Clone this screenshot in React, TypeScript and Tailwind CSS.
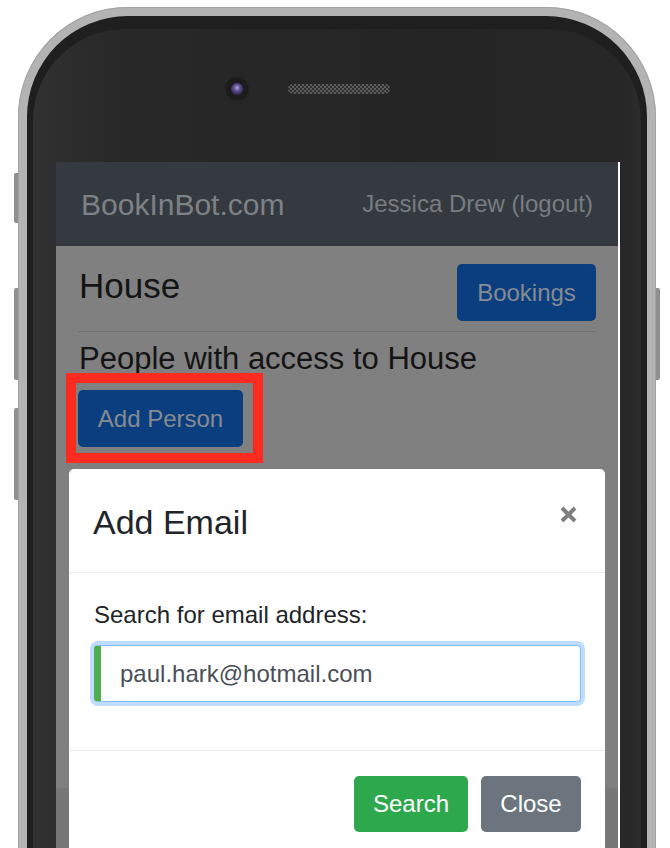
export default function App() {
  return (
    <div className="w-[670px] h-[848px] overflow-hidden bg-white font-['Liberation_Sans',Arial,sans-serif]">
      <div className="relative ml-[18px] mt-[7px] w-[638px] h-[900px]">
        {/* side buttons */}
        <div className="absolute -left-[4px] top-[166px] w-[4px] h-[50px] rounded-l-[2px] bg-[#8f8f8f]" />
        <div className="absolute -left-[4px] top-[281px] w-[4px] h-[92px] rounded-l-[2px] bg-[#8f8f8f]" />
        <div className="absolute -left-[4px] top-[401px] w-[4px] h-[92px] rounded-l-[2px] bg-[#8f8f8f]" />
        <div className="absolute -right-[4px] top-[281px] w-[4px] h-[92px] rounded-r-[2px] bg-[#8f8f8f]" />

        <div className="h-full rounded-t-[110px] bg-[#b3b3b3] p-[9px] pb-0 shadow-[inset_0_0_0_1px_#a2a2a2]">
          <div className="h-full rounded-t-[101px] bg-[#1f1f1f] px-[6px] pt-[13px]">
            <div className="h-full rounded-t-[92px] bg-[linear-gradient(90deg,#313131_0%,#282828_14%,#252525_60%,#262626_96%,#2c2c2c_100%)] flex flex-col">
              {/* camera + speaker */}
              <div className="h-[133px] flex items-start pt-[49px] pl-[193px] gap-[40px]">
                <div className="w-[22px] h-[22px] rounded-full bg-[#1c1c1c] flex items-center justify-center shadow-[0_0_2px_#141414]">
                  <div className="w-[12px] h-[12px] rounded-full bg-[radial-gradient(circle_at_50%_40%,#b3a6d6_0%,#5e4c94_35%,#2a2340_80%)]" />
                </div>
                <div className="mt-[6px] w-[102px] h-[10px] rounded-full bg-[repeating-conic-gradient(#5c5c5c_0%_25%,#2e2e2e_0%_50%)] bg-[length:4px_4px]" />
              </div>

              {/* screen */}
              <div className="flex-1 ml-[23px] mr-[21px] bg-white relative overflow-hidden">
                <div className="w-[562px] h-full flex flex-col">
                  <nav className="h-[84px] shrink-0 bg-[#343a40] flex items-center justify-between pl-[25px] pr-[25px]">
                    <span className="text-[30px] text-[#7e8185]">BookInBot.com</span>
                    <span className="text-[24px] text-[#797c80]">Jessica Drew (logout)</span>
                  </nav>

                  <main className="h-[542px] shrink-0 bg-[#808080] pl-[23px] pr-[22px] pt-[18px]">
                    <div className="flex justify-between items-start">
                      <h1 className="mt-[4px] text-[35px] leading-[35px] text-[#141414]">House</h1>
                      <button className="w-[139px] h-[57px] rounded-[5px] bg-[#0b3e7f] text-[24px] text-[#868b92]">
                        Bookings
                      </button>
                    </div>
                    <hr className="mt-[10px] -ml-[1px] border-t border-[#6f6f6f]" />
                    <h4 className="mt-[10px] text-[31px] leading-[34px] text-[#141414]">
                      People with access to House
                    </h4>
                    <div className="relative mt-[14px] w-fit">
                      <button className="-ml-[1px] w-[165px] h-[57px] rounded-[5px] bg-[#0b3e7f] text-[24px] text-[#868b92]">
                        Add Person
                      </button>
                      <div className="absolute -left-[13px] -top-[17px] w-[197px] h-[90px] border-[10px] border-[#fc2b1f]" />
                    </div>
                  </main>
                  <div className="flex-1 bg-[#777777]" />
                </div>

                {/* modal */}
                <div className="absolute left-[13px] top-[307px] w-[536px] h-[600px] bg-white rounded-[5px]">
                  <div className="h-[104px] border-b border-[#e9ecef] flex justify-between items-start pl-[24px] pr-[28px] pt-[34px]">
                    <h5 className="text-[34px] leading-[38px] text-[#212529]">Add Email</h5>
                    <svg className="mt-[3px]" width="17" height="17" viewBox="0 0 17 17">
                      <path d="M2 2L15 15M15 2L2 15" stroke="#7f7f7f" strokeWidth="4" />
                    </svg>
                  </div>
                  <div className="h-[177px] pl-[25px] pr-[24px] pt-[28px]">
                    <label className="block text-[24px] leading-[27px] text-[#212529]">Search for email address:</label>
                    <input
                      readOnly
                      value="paul.hark@hotmail.com"
                      className="mt-[17px] block w-full h-[57px] rounded-[4px] border border-[#80bdff] border-l-[7px] border-l-[#4cae4f] pl-[19px] text-[24px] text-[#495057] outline-none shadow-[0_0_0_4px_#c0dcfc]"
                    />
                  </div>
                  <div className="border-t border-[#e9ecef] pt-[25px] pr-[24px] flex justify-end gap-[13px]">
                    <button className="w-[114px] h-[56px] rounded-[5px] bg-[#2ea84c] text-[24px] text-white">Search</button>
                    <button className="w-[100px] h-[56px] rounded-[5px] bg-[#6c757d] text-[24px] text-white">Close</button>
                  </div>
                </div>
              </div>
            </div>
          </div>
        </div>
      </div>
    </div>
  );
}
